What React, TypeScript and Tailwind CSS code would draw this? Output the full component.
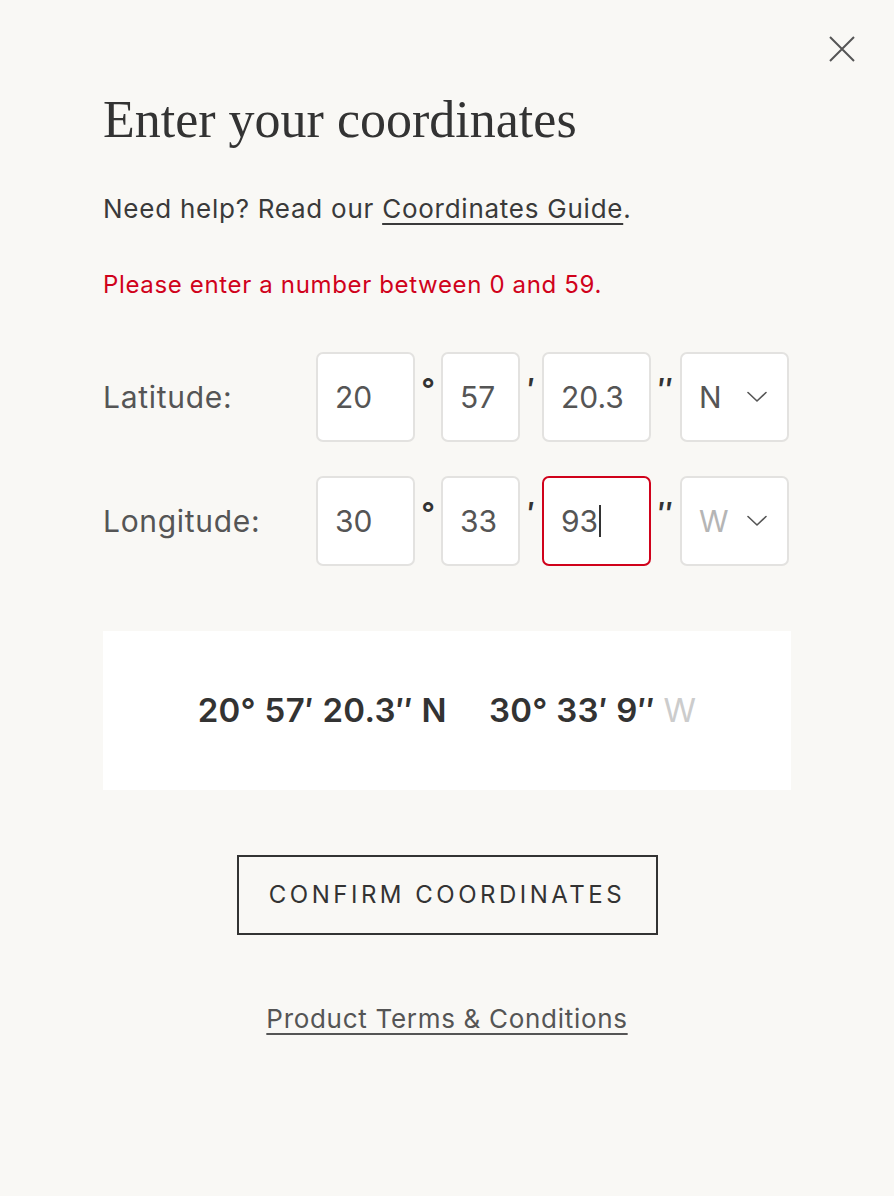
import React from "react";

const sans = "font-['Inter','Noto_Sans',sans-serif]";

function Chevron() {
  return (
    <svg width="20" height="12" viewBox="0 0 20 12" fill="none" className="shrink-0">
      <path d="M1 1.5 L10 10 L19 1.5" stroke="#555" strokeWidth="1.6" strokeLinecap="round" strokeLinejoin="round" />
    </svg>
  );
}

function Box({ w, children, error }: { w: string; children: React.ReactNode; error?: boolean }) {
  return (
    <div
      className={`${w} h-[90px] rounded-[7px] bg-white border-2 ${error ? "border-[#d0021b]" : "border-[#e3e2e0]"} flex items-center pl-[17px] text-[30px] text-[#555] ${sans}`}
    >
      {children}
    </div>
  );
}

function Sep({ w, ch }: { w: string; ch: string }) {
  return (
    <div className={`${w} h-[90px] flex justify-center pt-[22px] text-[30px] font-semibold text-[#333] ${sans}`}>
      <span className="leading-[30px]">{ch}</span>
    </div>
  );
}

function Row({
  label,
  deg,
  min,
  sec,
  dir,
  dirMuted,
  secError,
  caret,
}: {
  label: string;
  deg: string;
  min: string;
  sec: string;
  dir: string;
  dirMuted?: boolean;
  secError?: boolean;
  caret?: boolean;
}) {
  return (
    <div className="flex items-center">
      <div className={`w-[213px] text-[30px] text-[#555] tracking-[0.7px] ${sans}`}>{label}</div>
      <Box w="w-[99px]">{deg}</Box>
      <Sep w="w-[26px]" ch="°" />
      <Box w="w-[79px]">{min}</Box>
      <Sep w="w-[22px]" ch="′" />
      <Box w="w-[109px]" error={secError}>
        <span>{sec}</span>
        {caret && <span className="inline-block w-[2px] h-[32px] bg-[#333] ml-[1px]" />}
      </Box>
      <Sep w="w-[29px]" ch="″" />
      <div
        className={`w-[109px] h-[90px] rounded-[7px] bg-white border-2 border-[#e3e2e0] flex items-center justify-between pl-[17px] pr-[20px] text-[30px] ${dirMuted ? "text-[#b5b5b5]" : "text-[#555]"} ${sans}`}
      >
        <span>{dir}</span>
        <Chevron />
      </div>
    </div>
  );
}

export default function App() {
  return (
    <div className="min-h-[1196px] bg-[#f9f8f5] relative">
      <button className="absolute top-[36px] right-[39px] w-[26px] h-[26px]" aria-label="Close">
        <svg width="26" height="26" viewBox="0 0 26 26" fill="none">
          <path d="M1 1 L25 25 M25 1 L1 25" stroke="#555" strokeWidth="2" />
        </svg>
      </button>

      <div className="w-[688px] mx-auto pt-[89px] flex flex-col">
        <h1 className="font-['Liberation_Serif','Times_New_Roman',serif] text-[52px] leading-[62px] text-[#333] tracking-[0px]">
          Enter your coordinates
        </h1>

        <p className={`mt-[40px] text-[26px] leading-[36px] text-[#3a3a3a] tracking-[0.75px] ${sans}`}>
          Need help? Read our <a className="underline underline-offset-[5px] decoration-[2px]">Coordinates Guide</a>.
        </p>

        <p className={`mt-[42px] text-[24px] leading-[32px] text-[#d0021b] tracking-[0.65px] ${sans}`}>
          Please enter a number between 0 and 59.
        </p>

        <div className="mt-[51px] flex flex-col gap-[34px]">
          <Row label="Latitude:" deg="20" min="57" sec="20.3" dir="N" />
          <Row label="Longitude:" deg="30" min="33" sec="93" dir="W" dirMuted secError caret />
        </div>

        <div className={`mt-[65px] h-[159px] bg-white flex items-center justify-center gap-[42px] text-[33px] font-semibold text-[#333] tracking-[0.3px] ${sans}`}>
          <span>20° 57′ 20.3″ N</span>
          <span>
            30° 33′ 9″ <span className="text-[#cccccc] font-normal">W</span>
          </span>
        </div>

        <div className="mt-[65px] flex justify-center">
          <button className={`w-[421px] h-[80px] border-2 border-[#333] text-[24px] tracking-[3.5px] text-[#333] ${sans}`}>
            CONFIRM COORDINATES
          </button>
        </div>

        <div className="mt-[66px] flex justify-center">
          <a className={`text-[26px] leading-[36px] text-[#555] underline underline-offset-[5px] decoration-[2px] tracking-[0.7px] ${sans}`}>
            Product Terms &amp; Conditions
          </a>
        </div>
      </div>
    </div>
  );
}
